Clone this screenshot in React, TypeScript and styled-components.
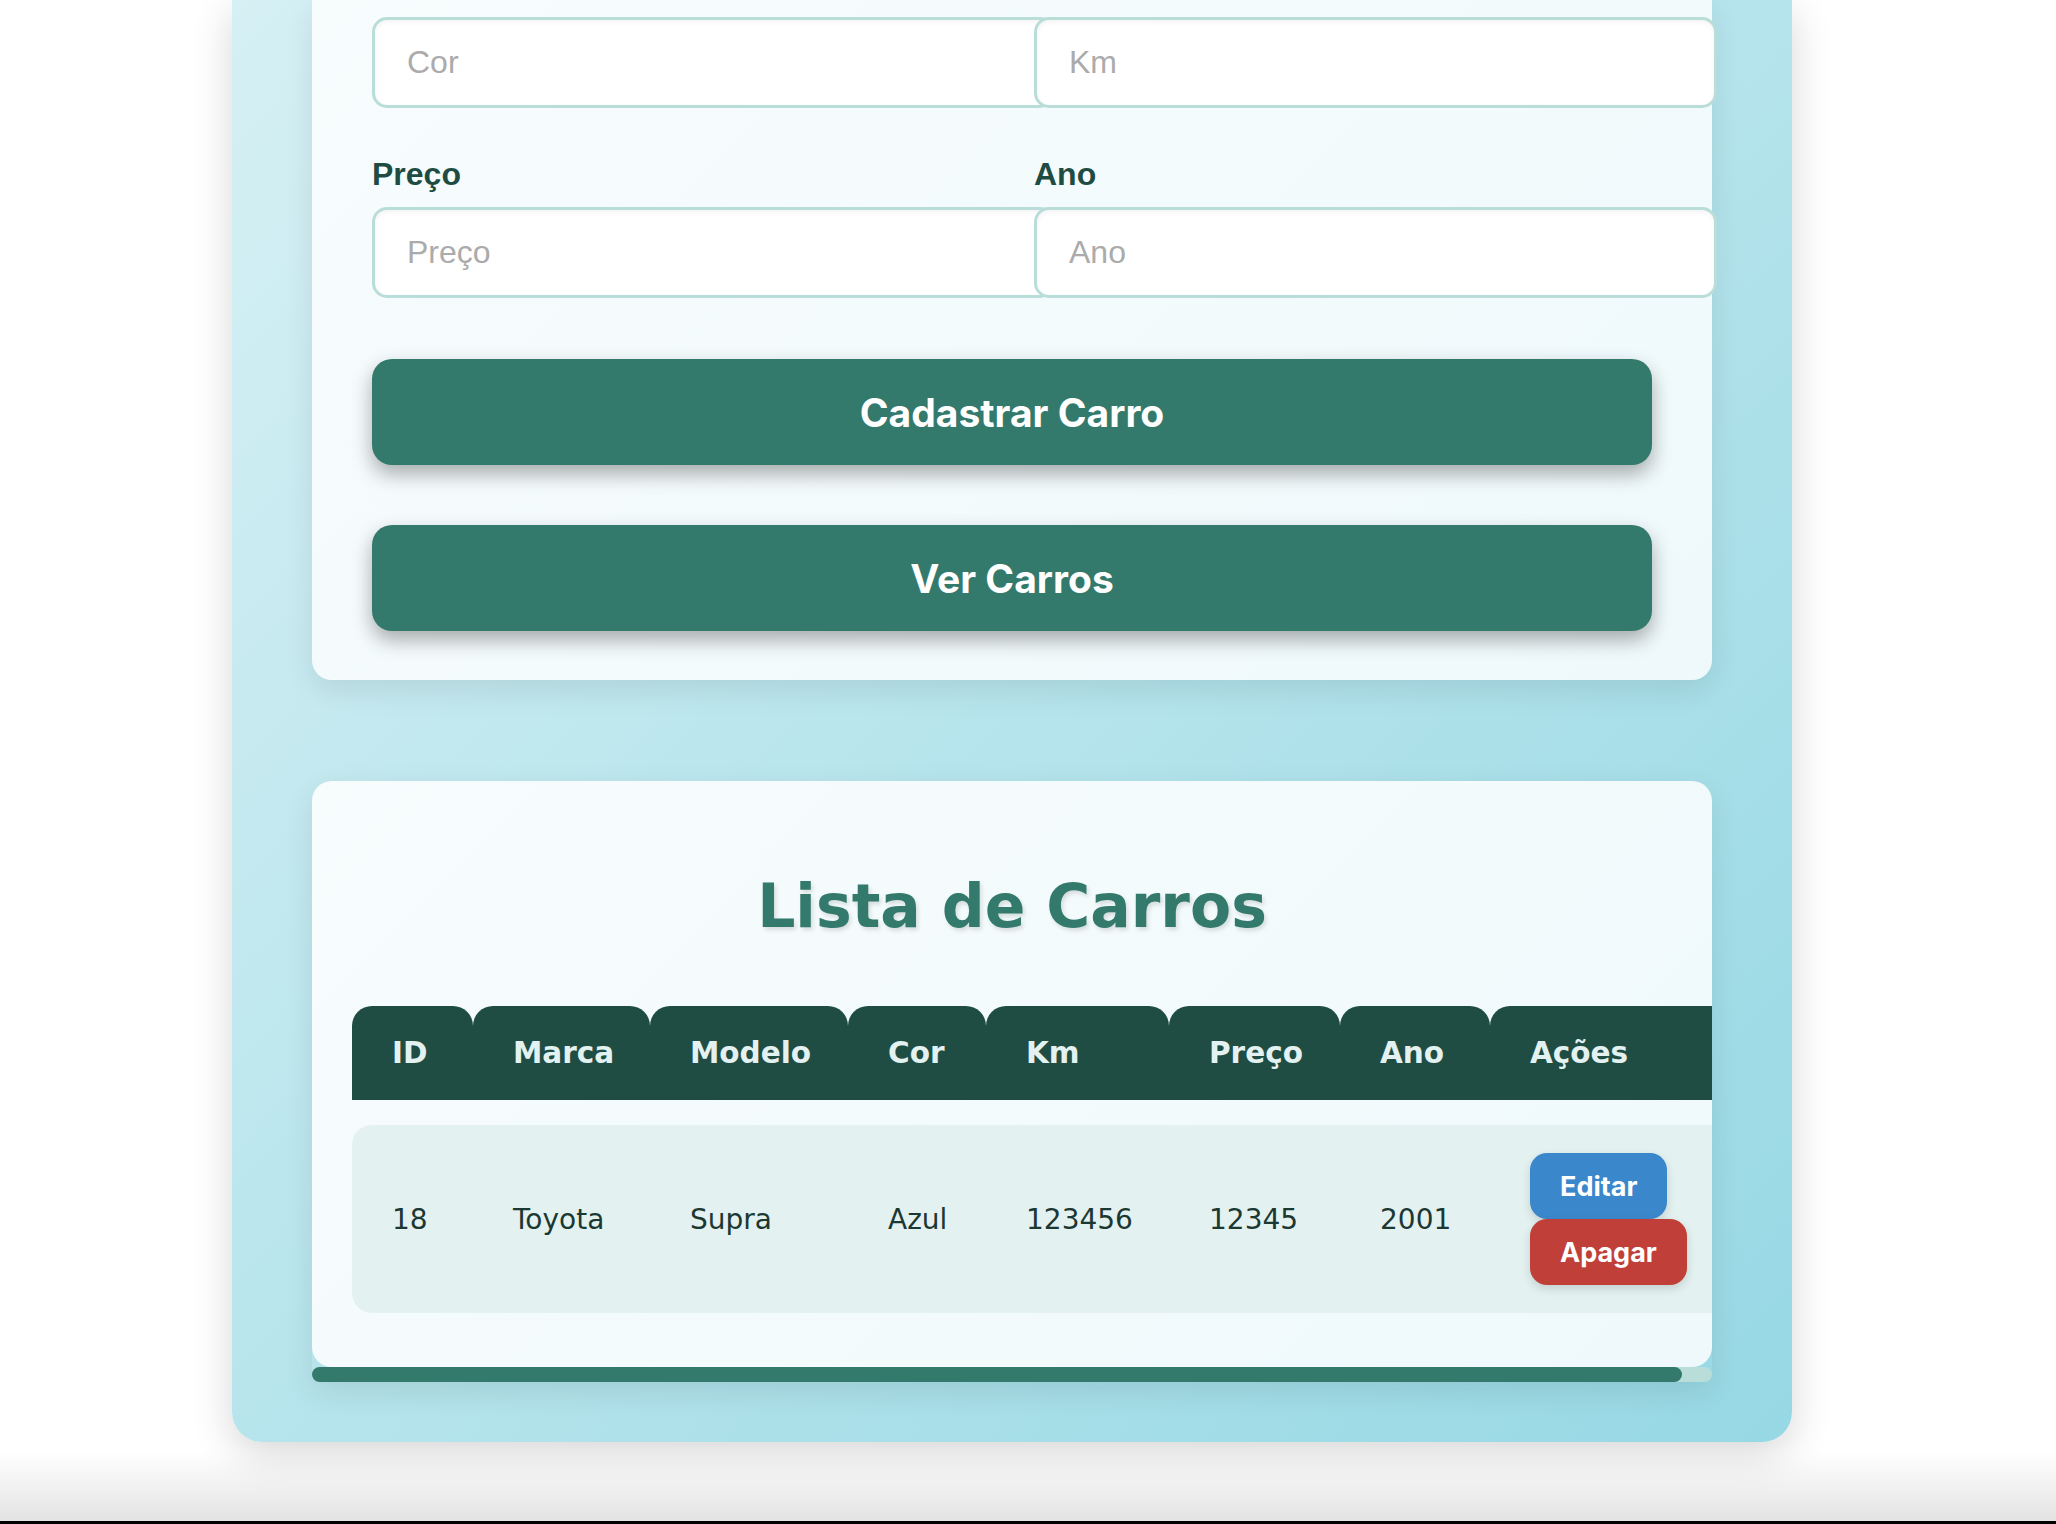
import React from 'react'
import styled, { createGlobalStyle } from 'styled-components'

const GlobalStyle = createGlobalStyle`
  html, body {
    margin: 0;
    padding: 0;
    height: 1524px;
    overflow: hidden;
  }
  body {
    font-family: "Liberation Sans", Arial, sans-serif;
  }
  * { box-sizing: border-box; }
`

const Page = styled.div`
  height: 1524px;
  padding-left: 232px;
  background: linear-gradient(to bottom, #ffffff 0, #ffffff 1452px, #e3e3e3 1521px, #000 1521px);
`

const Shell = styled.div`
  width: 1560px;
  padding: 0 80px 60px;
  border-radius: 0 0 30px 30px;
  background: linear-gradient(135deg, #d6f0f4 0%, #b6e4ec 50%, #96d8e4 100%);
  box-shadow: 0 12px 40px rgba(0, 0, 0, 0.16);
  display: flex;
  flex-direction: column;
  gap: 101px;
`

const cardSurface = `
  background: linear-gradient(135deg, #f7fcfd 0%, #eff9fb 100%);
`

const FormCard = styled.div`
  ${cardSurface}
  width: 1400px;
  border-radius: 0 0 20px 20px;
  padding: 17px 60px 49px;
  box-shadow: 0 10px 30px rgba(0, 0, 0, 0.09);
`

const FormGrid = styled.div`
  display: grid;
  grid-template-columns: 662px 618px;
  row-gap: 48px;
`

const Field = styled.div`
  display: flex;
  flex-direction: column;
`

const Label = styled.label`
  font-family: "Liberation Sans", Arial, sans-serif;
  font-weight: 700;
  font-size: 32px;
  color: #1e4c42;
  margin-bottom: 14px;
`

const Input = styled.input`
  width: 683px;
  height: 91px;
  padding: 0 32px;
  border: 3px solid #b9ddd9;
  border-radius: 15px;
  background: #fff;
  box-shadow: inset 0 2px 5px rgba(0, 0, 0, 0.05);
  font-family: "Liberation Sans", Arial, sans-serif;
  font-size: 32px;
  color: #1e4c42;
  outline: none;
  &::placeholder { color: #ababab; }
`

const Actions = styled.div`
  display: flex;
  flex-direction: column;
  gap: 60px;
  margin-top: 61px;
`

const BigButton = styled.button`
  height: 106px;
  width: 100%;
  border: none;
  border-radius: 20px;
  background: #347a6c;
  color: #fff;
  font-family: Inter, "Liberation Sans", sans-serif;
  font-weight: 700;
  font-size: 39px;
  box-shadow: 0 9px 20px rgba(0, 0, 0, 0.32);
  cursor: pointer;
`

const ListCard = styled.div`
  width: 1400px;
  border-radius: 20px 20px 8px 8px;
  box-shadow: 0 10px 30px rgba(0, 0, 0, 0.09);
`

const ListPanel = styled.div`
  ${cardSurface}
  border-radius: 20px 20px 20px 20px;
  padding: 0 0 29px 40px;
  overflow: hidden;
`

const Title = styled.h2`
  margin: 89px 0 39px -40px;
  width: 1400px;
  text-align: center;
  font-family: "DejaVu Sans", Verdana, sans-serif;
  font-weight: 700;
  font-size: 60px;
  line-height: 72px;
  color: #347a6c;
  text-shadow: 2px 3px 4px rgba(0, 0, 0, 0.12);
`

const Table = styled.table`
  width: 1390px;
  table-layout: fixed;
  border-collapse: separate;
  border-spacing: 0 25px;
  font-family: "DejaVu Sans", Verdana, sans-serif;
`

const Th = styled.th<{ $w?: number }>`
  width: ${p => (p.$w ? `${p.$w}px` : 'auto')};
  height: 94px;
  padding: 0 40px;
  text-align: left;
  background: #1f4d43;
  color: #e3f2f1;
  font-size: 29.5px;
  font-weight: 700;
  border-radius: 20px 20px 0 0;
`

const Td = styled.td`
  height: 188px;
  padding: 0 40px;
  background: #e3f2f1;
  color: #1c3832;
  font-size: 28px;
  vertical-align: middle;
  &:first-child { border-radius: 20px 0 0 20px; }
  &:last-child { border-radius: 0 20px 20px 0; }
`

const ActionStack = styled.div`
  display: flex;
  flex-direction: column;
  align-items: flex-start;
`

const RowButton = styled.button<{ $tone: 'edit' | 'delete' }>`
  height: 66px;
  padding: 0 30px;
  border: none;
  border-radius: 17px;
  background: ${p => (p.$tone === 'edit' ? '#3b87cb' : '#c13f39')};
  color: #fff;
  font-family: Inter, "Liberation Sans", sans-serif;
  font-weight: 700;
  font-size: 27px;
  box-shadow: 0 4px 10px rgba(0, 0, 0, 0.14);
  white-space: nowrap;
  cursor: pointer;
`

const ScrollTrack = styled.div`
  height: 15px;
  border-radius: 8px;
  background: #b9ddd8;
`

const ScrollThumb = styled.div`
  height: 100%;
  border-radius: 8px;
  background: #347a6c;
`

const columns = [
  { label: 'ID', w: 121 },
  { label: 'Marca', w: 177 },
  { label: 'Modelo', w: 198 },
  { label: 'Cor', w: 138 },
  { label: 'Km', w: 183 },
  { label: 'Preço', w: 171 },
  { label: 'Ano', w: 150 },
  { label: 'Ações' },
]

const cars = [
  { id: 18, marca: 'Toyota', modelo: 'Supra', cor: 'Azul', km: 123456, preco: 12345, ano: 2001 },
]

// visible width / scroll width of the table area
const thumbRatio = 1370 / 1400

export default function App() {
  return (
    <>
      <GlobalStyle />
      <Page>
        <Shell>
          <FormCard>
            <FormGrid>
              <Field>
                <Input placeholder="Cor" />
              </Field>
              <Field>
                <Input placeholder="Km" />
              </Field>
              <Field>
                <Label>Preço</Label>
                <Input placeholder="Preço" />
              </Field>
              <Field>
                <Label>Ano</Label>
                <Input placeholder="Ano" />
              </Field>
            </FormGrid>
            <Actions>
              <BigButton>Cadastrar Carro</BigButton>
              <BigButton>Ver Carros</BigButton>
            </Actions>
          </FormCard>

          <ListCard>
            <ListPanel>
              <Title>Lista de Carros</Title>
              <Table>
                <thead>
                  <tr>
                    {columns.map(c => (
                      <Th key={c.label} $w={c.w}>{c.label}</Th>
                    ))}
                  </tr>
                </thead>
                <tbody>
                  {cars.map(car => (
                    <tr key={car.id}>
                      <Td>{car.id}</Td>
                      <Td>{car.marca}</Td>
                      <Td>{car.modelo}</Td>
                      <Td>{car.cor}</Td>
                      <Td>{car.km}</Td>
                      <Td>{car.preco}</Td>
                      <Td>{car.ano}</Td>
                      <Td>
                        <ActionStack>
                          <RowButton $tone="edit">Editar</RowButton>
                          <RowButton $tone="delete">Apagar</RowButton>
                        </ActionStack>
                      </Td>
                    </tr>
                  ))}
                </tbody>
              </Table>
            </ListPanel>
            <ScrollTrack>
              <ScrollThumb style={{ width: `${thumbRatio * 100}%` }} />
            </ScrollTrack>
          </ListCard>
        </Shell>
      </Page>
    </>
  )
}
